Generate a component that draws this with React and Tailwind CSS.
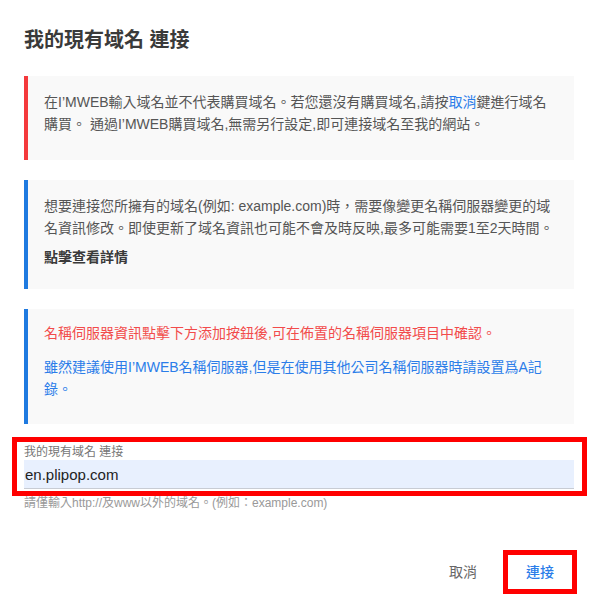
import React from 'react';

const font = { fontFamily: '"Liberation Sans", "Noto Sans CJK TC", sans-serif' };

const Notice = ({ color, className = '', children }) => (
  <div className={`bg-[#f9f9f9] border-l-4 ${color} pl-[16px] pr-[18px] text-[14px] leading-[22px] text-[#555] ${className}`}>
    {children}
  </div>
);

const App = () => {
  return (
    <div className="w-[598px] h-[601px] bg-white px-6 pt-[26px]" style={font}>
      <h2 className="text-[20px] leading-[28px] font-semibold text-[#3a3a3a]">我的現有域名 連接</h2>

      <div className="mt-[22px] flex flex-col gap-5">
        <Notice color="border-[#f4393c]" className="pt-[15px] pb-[25px]">
          <p>
            在I’MWEB輸入域名並不代表購買域名。若您還沒有購買域名,請按<span className="text-[#2b7de9]">取消</span>鍵進行域名購買。 通過I’MWEB購買域名,無需另行設定,即可連接域名至我的網站。
          </p>
        </Notice>

        <Notice color="border-[#1f7ae0]" className="pt-[15px] pb-[21px]">
          <p>想要連接您所擁有的域名(例如: example.com)時，需要像變更名稱伺服器變更的域名資訊修改。即使更新了域名資訊也可能不會及時反映,最多可能需要1至2天時間。</p>
          <p className="mt-[7px] font-semibold text-[#3a3a3a]">點擊查看詳情</p>
        </Notice>

        <Notice color="border-[#1f7ae0]" className="pt-[13px] pb-[24px]">
          <p className="text-[#f24b4b]">名稱伺服器資訊點擊下方添加按鈕後,可在佈置的名稱伺服器項目中確認。</p>
          <p className="mt-[12px] text-[#2b7de9]">雖然建議使用I’MWEB名稱伺服器,但是在使用其他公司名稱伺服器時請設置爲A記錄。</p>
        </Notice>
      </div>

      <div className="mt-[21px]">
        <div className="relative">
          <label className="block text-[12px] leading-[15px] text-[#777]">我的現有域名 連接</label>
          <input
            readOnly
            value="en.plipop.com"
            className="block w-full h-[29px] bg-[#e8f0fe] border-b border-[#c8ccd4] px-[1px] text-[15px] text-[#222] outline-none"
            style={font}
          />
          <div className="absolute -left-3 -right-[13px] -top-2 -bottom-[7px] border-[5px] border-[#ff0000] pointer-events-none" />
        </div>
        <p className="mt-[6px] text-[12px] leading-[16px] text-[#999]">請僅輸入http://及www以外的域名。(例如：example.com)</p>
      </div>

      <div className="mt-[39px] -mr-[3px] flex justify-end gap-[3px]">
        <button className="w-[74px] h-[44px] text-[14px] text-[#666]">取消</button>
        <div className="relative">
          <button className="w-[74px] h-[44px] text-[14px] text-[#2b7de9] font-medium">連接</button>
          <div className="absolute inset-0 border-[5px] border-[#ff0000] pointer-events-none" />
        </div>
      </div>
    </div>
  );
};

export default App;
